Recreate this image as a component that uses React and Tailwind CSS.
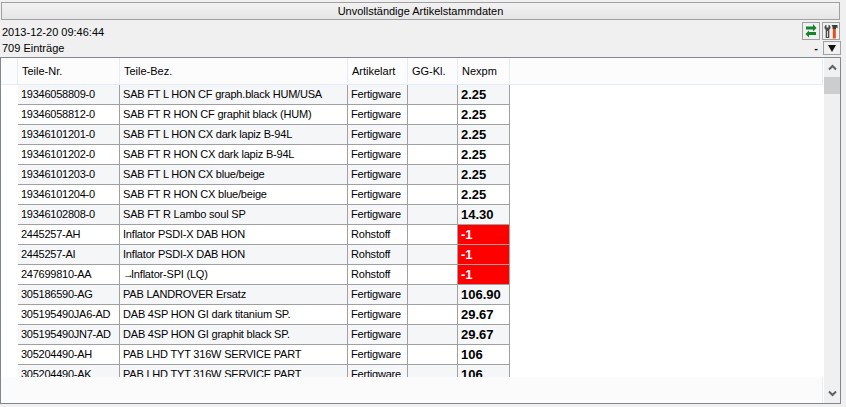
const rows = [
  ["19346058809-0", "SAB FT L HON CF graph.black HUM/USA", "Fertigware", "2.25"],
  ["19346058812-0", "SAB FT R HON CF graphit black (HUM)", "Fertigware", "2.25"],
  ["19346101201-0", "SAB FT L HON CX dark lapiz B-94L", "Fertigware", "2.25"],
  ["19346101202-0", "SAB FT R HON CX dark lapiz B-94L", "Fertigware", "2.25"],
  ["19346101203-0", "SAB FT L HON CX blue/beige", "Fertigware", "2.25"],
  ["19346101204-0", "SAB FT R HON CX blue/beige", "Fertigware", "2.25"],
  ["19346102808-0", "SAB FT R Lambo soul SP", "Fertigware", "14.30"],
  ["2445257-AH", "Inflator PSDI-X DAB HON", "Rohstoff", "-1"],
  ["2445257-AI", "Inflator PSDI-X DAB HON", "Rohstoff", "-1"],
  ["247699810-AA", <><span className="tracking-[-3px]">→</span>Inflator-SPI (LQ)</>, "Rohstoff", "-1"],
  ["305186590-AG", "PAB LANDROVER Ersatz", "Fertigware", "106.90"],
  ["305195490JA6-AD", "DAB 4SP HON GI dark titanium SP.", "Fertigware", "29.67"],
  ["305195490JN7-AD", "DAB 4SP HON GI graphit black SP.", "Fertigware", "29.67"],
  ["305204490-AH", "PAB LHD TYT 316W SERVICE PART", "Fertigware", "106"],
  ["305204490-AK", "PAB LHD TYT 316W SERVICE PART", "Fertigware", "106"],
];

const headers = [
  ["Teile-Nr.", "w-[102px]"],
  ["Teile-Bez.", "w-[228px]"],
  ["Artikelart", "w-[60px]"],
  ["GG-Kl.", "w-[50px]"],
  ["Nexpm", "w-[52px]"],
];

function RefreshIcon() {
  return (
    <svg width="12" height="14" viewBox="0 0 12 14">
      <path d="M1 3h7V0.500L11.500 4.500 8 8.000V6H1z" fill="#14842b" transform="translate(0 -0.500)" />
      <path d="M11 8H4V6.500L0.500 10 4 13.500V11h7z" fill="#14842b" />
    </svg>
  );
}

function ToolsIcon() {
  return (
    <svg width="14" height="15" viewBox="0 0 14 15">
      <path d="M0.500 3.500C0.500 1.800 1.600 1 2.500 0.800V3.500H4.500V0.800C5.400 1 6.500 1.800 6.500 3.500 6.500 4.500 6 5.200 5.300 5.600V14H1.700V5.600C1 5.200 0.500 4.500 0.500 3.500z" fill="#4a4a4a" />
      <path d="M3 7h1v6H3z" fill="#d8d8d8" />
      <path d="M7.500 1h6v3.500L12 3.300V5H8.500V2.800z" fill="#3c3c3c" />
      <path d="M8.800 5h3v9.500h-3z" fill="#e4501c" />
    </svg>
  );
}

export default function App() {
  return (
    <div className="flex h-[407px] w-[846px] flex-col overflow-hidden bg-[#f0f0f0] font-['Liberation_Sans',sans-serif] text-[11px] leading-none text-black">
      <div className="ml-px mr-[6px] mt-[2px] flex h-[18px] items-center justify-center border border-[#a0a0a0] bg-gradient-to-b from-[#f2f2f2] to-[#e6e6e6]">
        Unvollständige Artikelstammdaten
      </div>

      <div className="flex h-[37px] items-start justify-between pl-[2px] pr-[5px]">
        <div className="flex flex-col gap-[4px] pt-[7px]">
          <span className="h-[12px]">2013-12-20 09:46:44</span>
          <span className="h-[12px]">709 Einträge</span>
        </div>
        <div className="flex flex-col items-end gap-px pt-[2px]">
          <div className="flex gap-[2px] pr-px">
            <div className="flex h-[18px] w-[18px] items-center justify-center border border-[#a0a0a0]"><RefreshIcon /></div>
            <div className="flex h-[18px] w-[18px] items-center justify-center border border-[#a0a0a0]"><ToolsIcon /></div>
          </div>
          <div className="flex items-center gap-[5px]">
            <span className="font-bold">-</span>
            <div className="flex h-[14px] w-[18px] items-center justify-center border border-[#a0a0a0]">
              <svg width="8" height="7" viewBox="0 0 8 7"><path d="M0 0h8L4 7z" fill="#111" /></svg>
            </div>
          </div>
        </div>
      </div>

      <div className="ml-0 mr-[5px] flex h-[347px] border border-[#82878f] bg-white">
        <div className="flex min-w-0 flex-1 flex-col">
          <div className="mr-px flex h-[27px] shrink-0 border-b border-r border-[#e3edf8] bg-[#fcfcfd]">
            <div className="w-[17px] border-r border-[#e3edf8]" />
            {headers.map(([label, w]) => (
              <div key={label} className={`${w} flex items-center border-r border-[#e3edf8] pl-[4px] pt-px`}>{label}</div>
            ))}
          </div>
          <div className="h-[292px] shrink-0 overflow-hidden">
            {rows.map((r, i) => {
              const tint = i % 2 === 0 ? "bg-[#f5f6f8]" : "bg-white";
              const neg = r[3] === "-1";
              return (
                <div key={r[0]} className="ml-[17px] flex h-[20px] w-[492px]">
                  <div className={`${tint} w-[102px] whitespace-nowrap border-b border-r border-[#a0a0a0] pl-[3px] pt-[4px] tracking-[-0.25px]`}>{r[0]}</div>
                  <div className={`${tint} w-[228px] whitespace-nowrap border-b border-r border-[#a0a0a0] pl-[3px] pt-[4px] tracking-[-0.2px]`}>{r[1]}</div>
                  <div className={`${tint} w-[60px] whitespace-nowrap border-b border-r border-[#a0a0a0] pl-[3px] pt-[4px] tracking-[-0.2px]`}>{r[2]}</div>
                  <div className={`${tint} w-[50px] border-b border-r border-[#a0a0a0]`} />
                  <div className={`${neg ? "bg-[#ff0000] text-white" : tint} w-[52px] border-b border-r border-[#a0a0a0] pl-[3px] pt-[3px] text-[13px] font-bold`}>{r[3]}</div>
                </div>
              );
            })}
          </div>
          <div className="mr-px flex-1 border-r border-[#e3edf8] bg-[#fbfbfc]" />
        </div>
        <div className="flex w-[16px] shrink-0 flex-col items-center bg-[#f0f0f0]">
          <div className="flex h-[19px] items-center justify-center">
            <svg width="9" height="7" viewBox="0 0 9 7"><path d="M1 5.500l3.500-3.500L8 5.500" fill="none" stroke="#606060" strokeWidth="2" /></svg>
          </div>
          <div className="h-[17px] w-full bg-[#cdcdcd]" />
          <div className="flex-1" />
          <div className="flex h-[19px] items-center justify-center">
            <svg width="9" height="7" viewBox="0 0 9 7"><path d="M1 1.500l3.500 3.500L8 1.500" fill="none" stroke="#606060" strokeWidth="2" /></svg>
          </div>
        </div>
      </div>
    </div>
  );
}
